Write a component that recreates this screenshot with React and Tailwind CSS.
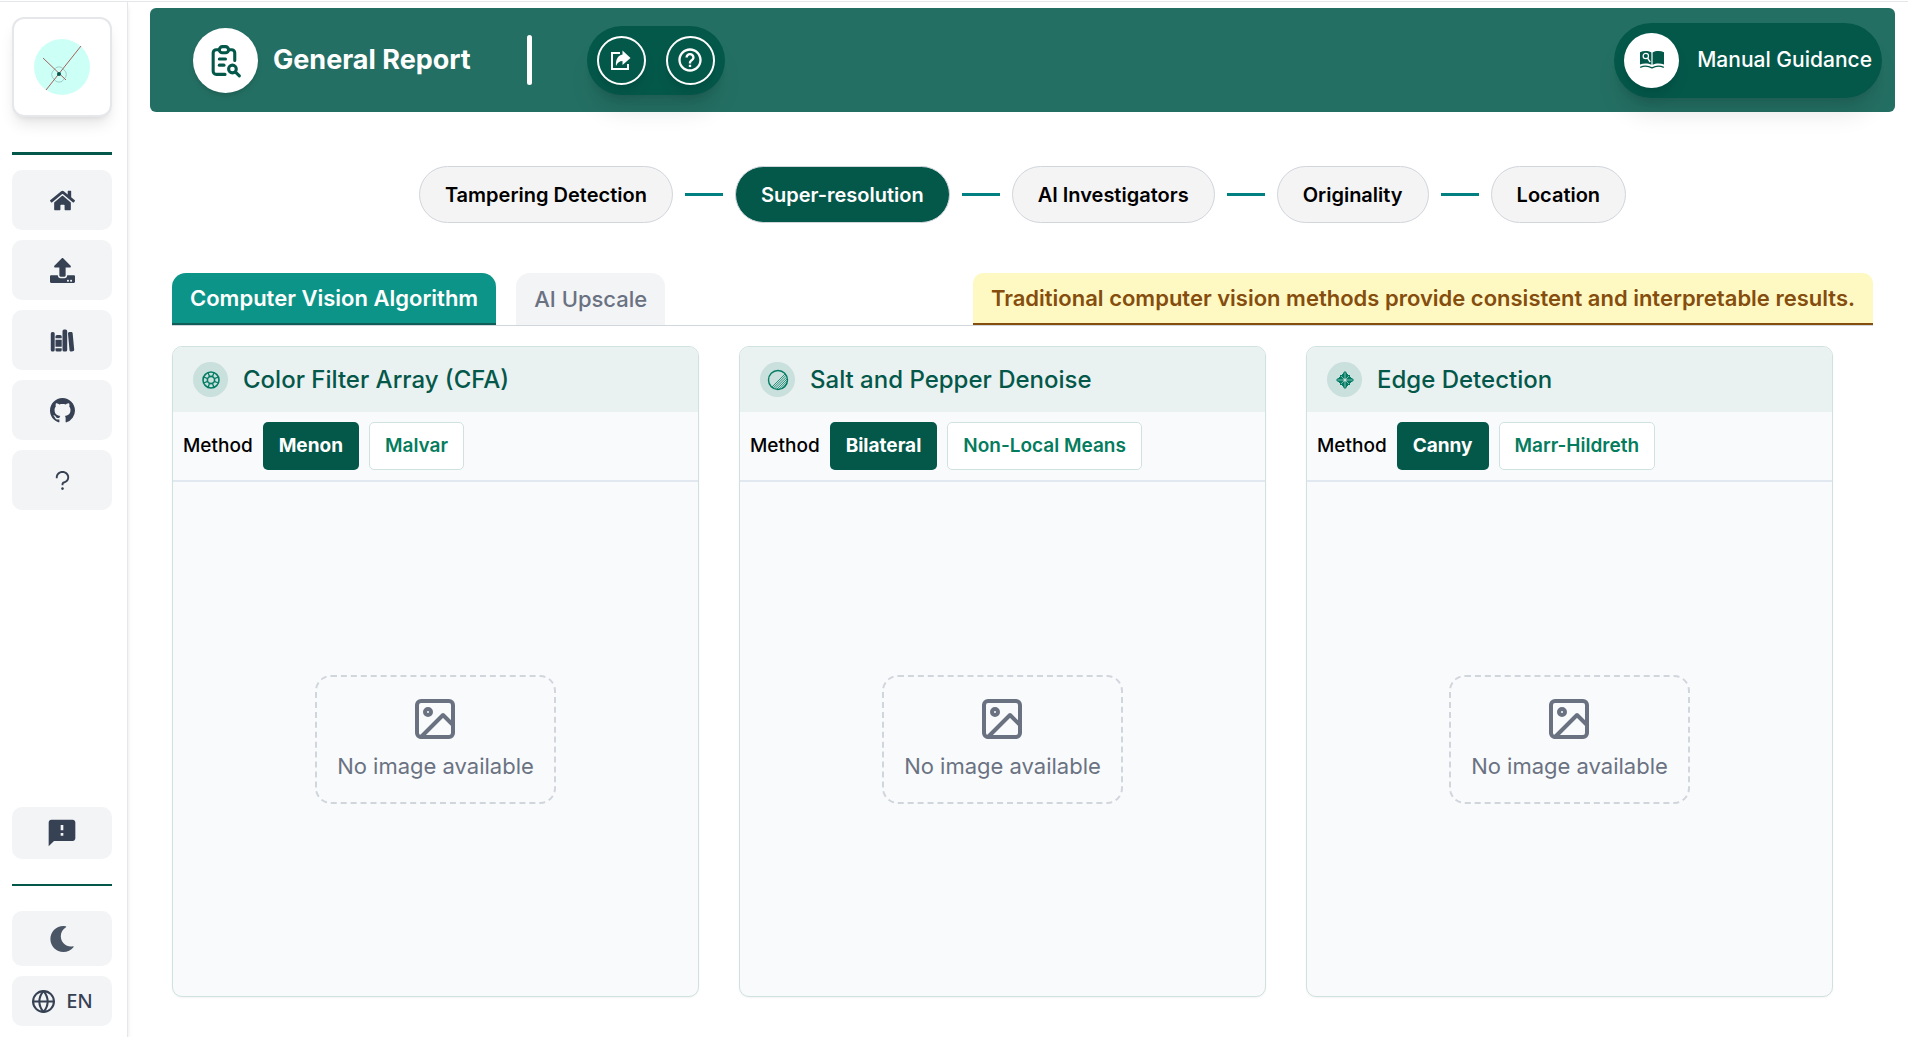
import React from "react";
import { FaHome, FaMoon, FaUpload } from "react-icons/fa";
import { IoLibrary } from "react-icons/io5";
import { BsGithub } from "react-icons/bs";
import { AiOutlineQuestion } from "react-icons/ai";
import { MdFeedback } from "react-icons/md";
import { TbReportSearch } from "react-icons/tb";
import { BiHelpCircle } from "react-icons/bi";
import { FiGlobe, FiImage } from "react-icons/fi";

function Logo() {
  return (
    <svg viewBox="0 0 56 56" className="size-14" aria-hidden="true">
      <circle cx="28" cy="28" r="28" fill="#ccfff6" />
      <g fill="none" stroke="#9fcfc6" strokeWidth="1">
        <path d="M20 31a5.500 5.500 0 0 1 10 0 5.500 5.500 0 0 1 0 9 5.500 5.500 0 0 1-10 0 5.500 5.500 0 0 1 0-9z" />
      </g>
      <path d="M47 7 12 51M9 19l23 22" stroke="#a8605c" strokeWidth="1" />
      <circle cx="25" cy="35" r="2" fill="#04584a" />
    </svg>
  );
}

function ShareIcon() {
  return (
    <svg viewBox="0 0 20 20" className="size-5" aria-hidden="true">
      <path fill="none" stroke="currentColor" strokeWidth="2" d="M9 3H1v16h16v-5" />
      <path fill="currentColor" d="M11.500.5 19.500 8l-8 7v-4C8.500 11 6.500 12.500 5 16c-.6-6 2-11 6.500-11.500z" />
    </svg>
  );
}

function OpenBookSearch() {
  return (
    <svg viewBox="0 0 24 18" className="h-[18px] w-6" aria-hidden="true">
      <path fill="#04584a" d="M0 1.200C3.500-.3 8-.3 11.400 1.400v12.400C8 12 3.500 12 0 13.600zM12.600 1.400C16-.3 20.500-.3 24 1.200v12.400C20.500 12 16 12 12.600 13.800z" />
      <path fill="none" stroke="#04584a" strokeWidth="1.300" d="M.2 16.400c3.600-1.800 8-1.600 11.800.4 3.800-2 8.200-2.200 11.800-.4" />
      <circle cx="5.800" cy="5" r="2.700" fill="none" stroke="#fff" strokeWidth="1.200" />
      <path d="m7.600 7.200 2.600 4" stroke="#fff" strokeWidth="1.400" />
    </svg>
  );
}

function MeshIcon() {
  return (
    <svg viewBox="0 0 18 18" className="size-[18px]" fill="none" stroke="#047c65" aria-hidden="true">
      <circle cx="9" cy="9" r="8" strokeWidth="1.600" />
      <circle cx="9" cy="9" r="3.600" strokeWidth="1.600" />
      <path strokeWidth="1.300" d="M7.600 5.700 6 1.600M10.400 5.700 12 1.600M12.300 7.600 16.400 6M12.300 10.400l4.100 1.600M10.400 12.300l1.600 4.100M7.600 12.300 6 16.400M5.700 10.400 1.600 12M5.700 7.600 1.600 6" />
    </svg>
  );
}

function HatchIcon() {
  return (
    <svg viewBox="0 0 22 22" className="size-[22px]" fill="none" stroke="#047c65" aria-hidden="true">
      <circle cx="11" cy="11" r="9.500" strokeWidth="1.400" />
      <path strokeWidth=".8" d="M5 18 18 5M6.200 19 19 6.300M8 19.500 19.800 8M10 20l10-10M12 20.300l8.200-8.300M14.500 19.800l5.300-5.300" />
    </svg>
  );
}

function DiamondIcon() {
  return (
    <svg viewBox="0 0 18 18" className="size-[18px]" aria-hidden="true">
      <path
        fill="#047c65"
        d="M9 0 11 2v1h1v1h2v2h1v1h1l2 2-2 2h-1v1h-1v2h-2v1h-1v1l-2 2-2-2v-1H6v-1H4v-2H3v-1H2L0 9l2-2h1V6h1V4h2V3h1V2z"
      />
      <path stroke="#9ccabf" strokeWidth=".8" d="M9 1.500v15M1.500 9h15" />
      <path stroke="#9ccabf" strokeWidth=".8" d="m5 5 8 8M13 5l-8 8" />
      <circle cx="9" cy="9" r="1.500" fill="#c9e0dc" />
    </svg>
  );
}

const navItems = [
  { label: "Home", Icon: FaHome },
  { label: "Upload", Icon: FaUpload },
  { label: "Library", Icon: IoLibrary },
  { label: "GitHub", Icon: BsGithub },
  { label: "Help", Icon: AiOutlineQuestion },
];

const steps = ["Tampering Detection", "Super-resolution", "AI Investigators", "Originality", "Location"];

const cards = [
  { title: "Color Filter Array (CFA)", Icon: MeshIcon, methods: ["Menon", "Malvar"] },
  { title: "Salt and Pepper Denoise", Icon: HatchIcon, methods: ["Bilateral", "Non-Local Means"] },
  { title: "Edge Detection", Icon: DiamondIcon, methods: ["Canny", "Marr-Hildreth"] },
];

function Sidebar() {
  return (
    <aside className="flex w-32 shrink-0 flex-col border-r border-gray-200 px-3 pt-[15px] pb-[11px] text-gray-700 shadow-md">
      <a href="#home" aria-label="Logo" className="flex h-[100px] w-[100px] items-center justify-center rounded-xl border-2 border-gray-200 bg-white shadow-lg">
        <Logo />
      </a>
      <hr className="mt-[35px] w-[100px] border-t-[3px] border-[#04584a]" />
      <nav className="mt-[15px] flex flex-col gap-2.5">
        {navItems.map(({ label, Icon }) => (
          <a key={label} href="#nav" aria-label={label} className="flex h-[60px] w-[100px] items-center justify-center rounded-[10px] bg-gray-100">
            <Icon size={25} />
          </a>
        ))}
      </nav>
      <button aria-label="Feedback" className="mt-auto flex h-[52px] w-[100px] items-center justify-center rounded-[10px] bg-gray-100">
        <MdFeedback size={32} />
      </button>
      <hr className="my-[25px] w-[100px] border-t-2 border-[#04584a]" />
      <button aria-label="Dark mode" className="flex h-[55px] w-[100px] items-center justify-center rounded-[10px] bg-gray-100 text-gray-600">
        <FaMoon size={26} />
      </button>
      <button className="mt-2.5 flex h-[50px] w-[100px] items-center justify-center gap-2.5 rounded-[10px] bg-gray-100 font-['Noto_Sans',sans-serif] text-xl font-medium">
        <FiGlobe size={25} />
        EN
      </button>
    </aside>
  );
}

function Header() {
  return (
    <header className="flex h-[104px] items-center rounded-md bg-[#246f63] pr-[13px] pl-[43px] text-white">
      <span className="flex size-[65px] items-center justify-center rounded-full bg-white text-[#04584a] shadow-md">
        <TbReportSearch size={37} />
      </span>
      <h1 className="ml-[15px] text-[27px] font-bold whitespace-nowrap">General Report</h1>
      <span className="ml-14 h-[50px] w-[5px] rounded-full bg-white" />
      <div className="ml-[55px] flex h-[69px] items-center gap-5 rounded-full bg-[#04584a] px-2.5 shadow-xl">
        <button aria-label="Share" className="flex size-[49px] items-center justify-center rounded-full border-2 border-white shadow-lg">
          <ShareIcon />
        </button>
        <button aria-label="Help" className="flex size-[49px] items-center justify-center rounded-full border-2 border-white shadow-lg">
          <BiHelpCircle size={28} />
        </button>
      </div>
      <button className="ml-auto flex h-[75px] items-center rounded-full bg-[#04584a] px-2.5 shadow-xl">
        <span className="flex size-[55px] items-center justify-center rounded-full bg-white shadow-lg">
          <OpenBookSearch />
        </span>
        <span className="ml-[18px] text-[21px] font-medium whitespace-nowrap">Manual Guidance</span>
      </button>
    </header>
  );
}

function Stepper() {
  return (
    <nav className="mt-[54px] flex items-center justify-center gap-3">
      {steps.map((step, i) => (
        <React.Fragment key={step}>
          {i > 0 && <span className="h-[3px] w-[38px] bg-[#008080]" />}
          <button
            className={
              i === 1
                ? "h-[57px] rounded-full border border-gray-300 bg-[#04584a] px-[25px] text-xl font-semibold whitespace-nowrap text-white"
                : "h-[57px] rounded-full border border-gray-300 bg-[#f4f4f4] px-[25px] text-xl font-semibold whitespace-nowrap text-black"
            }
          >
            {step}
          </button>
        </React.Fragment>
      ))}
    </nav>
  );
}

function Card({ title, Icon, methods }) {
  return (
    <article className="flex flex-col overflow-hidden rounded-[10px] border border-[#d0e2e0] bg-[#f9fafc] shadow-xs">
      <div className="flex h-[65px] items-center gap-[15px] bg-[#eaf1f1] px-5">
        <span className="flex size-[35px] items-center justify-center rounded-full bg-[#c9e0dc]">
          <Icon />
        </span>
        <h2 className="text-2xl font-medium whitespace-nowrap text-[#04584a]">{title}</h2>
      </div>
      <div className="flex items-center gap-2.5 border-b-2 border-slate-200 p-2.5">
        <span className="text-[19px] font-medium text-black">Method</span>
        <button className="h-12 rounded-[5px] bg-[#04584a] px-4 text-[19px] font-bold whitespace-nowrap text-white">{methods[0]}</button>
        <button className="h-12 rounded-[5px] border border-[#d0e2e0] bg-white px-[15px] text-[19px] font-semibold whitespace-nowrap text-[#047c5d]">{methods[1]}</button>
      </div>
      <div className="flex flex-1 items-center justify-center">
        <div className="flex flex-col items-center gap-2 rounded-2xl border-2 border-dashed border-gray-300 px-5 pt-[18px] pb-[21px] text-gray-500">
          <FiImage size={48} />
          <p className="text-[22px] leading-[30px] whitespace-nowrap">No image available</p>
        </div>
      </div>
    </article>
  );
}

export default function App() {
  return (
    <div className="flex min-h-screen flex-col bg-white pt-px font-['Inter',sans-serif]">
      <div className="flex flex-1 border-t border-gray-200">
        <Sidebar />
        <main className="flex min-w-0 flex-1 flex-col pt-1.5 pr-[13px] pb-10 pl-[22px]">
          <Header />
          <Stepper />
          <section className="mt-[50px] flex flex-1 flex-col px-[22px]">
            <div className="flex h-[53px] border-b border-gray-300 text-[22px]">
              <button className="rounded-t-[14px] border-b-2 border-[#115e59] bg-[#0d9488] px-[18px] font-semibold whitespace-nowrap text-white">
                Computer Vision Algorithm
              </button>
              <button className="ml-5 rounded-t-[14px] bg-gray-100 px-[18px] font-medium whitespace-nowrap text-gray-500">AI Upscale</button>
              <p className="ml-auto flex items-center rounded-t-[10px] border-b-2 border-[#854d0e] bg-[#fef9c3] px-[18px] font-semibold whitespace-nowrap text-[#854d0e]">
                Traditional computer vision methods provide consistent and interpretable results.
              </p>
            </div>
            <div className="mt-5 grid flex-1 grid-cols-3 gap-10 pr-10">
              {cards.map((card) => (
                <Card key={card.title} {...card} />
              ))}
            </div>
          </section>
        </main>
      </div>
    </div>
  );
}
